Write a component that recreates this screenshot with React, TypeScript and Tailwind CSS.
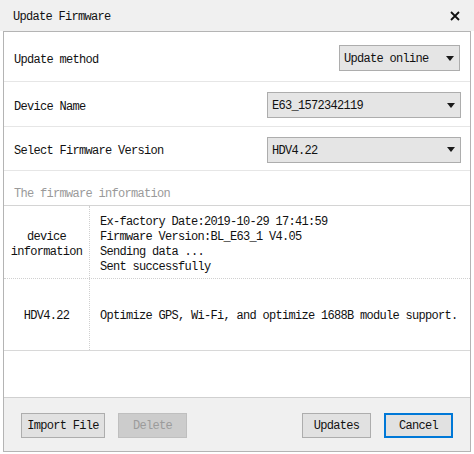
import React from "react";

function Arrow() {
  return (
    <svg width="8" height="5" viewBox="0 0 8 5" className="shrink-0">
      <path d="M0 0 H8 L4 5 Z" fill="#1a1a1a" />
    </svg>
  );
}

function Select({ value, className }: { value: string; className: string }) {
  return (
    <div
      className={`h-[26px] bg-[#e5e5e5] border border-[#adadad] flex items-center justify-between pl-[4px] pr-[5px] ${className}`}
    >
      <span className="pt-[3px]">{value}</span>
      <Arrow />
    </div>
  );
}

function Button({
  label,
  className,
}: {
  label: string;
  className: string;
}) {
  return (
    <div
      className={`h-[25px] flex items-center justify-center border pt-[3px] ${className}`}
    >
      {label}
    </div>
  );
}

export default function App() {
  return (
    <div className="w-[474px] h-[454px] bg-white text-[#111] font-['Liberation_Mono',monospace] text-[12px] tracking-[-0.7px] leading-[15px] flex flex-col">
      <div className="h-[31px] bg-[#f0f0f0] flex items-center justify-between pl-[13px] pr-[14px]">
        <span className="pt-[4px]">Update Firmware</span>
        <svg width="10" height="10" viewBox="0 0 10 10" className="mt-[1px]">
          <path d="M1 1 L9 9 M9 1 L1 9" stroke="#111" strokeWidth="1.8" />
        </svg>
      </div>
      <div className="mx-[3px] w-[468px] h-[421px] border border-[#b4b4b4] flex flex-col bg-white">
        <div className="h-[50px] border-b border-[#e6e6e6] flex items-center justify-between pl-[10px] pr-[10px] pt-[3px]">
          <span className="pt-[4px]">Update method</span>
          <Select value="Update online" className="w-[121px]" />
        </div>
        <div className="h-[45px] border-b border-[#e6e6e6] flex items-center justify-between pl-[10px] pr-[9px] pt-[2px]">
          <span className="pt-[4px]">Device Name</span>
          <Select value="E63_1572342119" className="w-[194px]" />
        </div>
        <div className="h-[44px] border-b border-[#e6e6e6] flex items-center justify-between pl-[10px] pr-[9px] pt-[2px]">
          <span className="pt-[4px]">Select Firmware Version</span>
          <Select value="HDV4.22" className="w-[194px]" />
        </div>
        <div className="h-[35px] border-b border-[#d4d4d4] pl-[10px] pt-[16px] text-[#9a9a9a]">
          The firmware information
        </div>
        <div className="h-[73px] border-b border-dotted border-[#d0d0d0] flex">
          <div className="w-[86px] border-r border-dotted border-[#d0d0d0] flex items-center justify-center text-center pt-[5px]">
            device
            <br />
            information
          </div>
          <div className="flex-1 flex flex-col justify-center pl-[10px] pt-[6px]">
            <div>Ex-factory Date:2019-10-29 17:41:59</div>
            <div>Firmware Version:BL_E63_1 V4.05</div>
            <div>Sending data ...</div>
            <div>Sent successfully</div>
          </div>
        </div>
        <div className="h-[72px] border-b border-[#d8d8d8] flex">
          <div className="w-[86px] border-r border-dotted border-[#d0d0d0] flex items-center justify-center pt-[4px]">
            HDV4.22
          </div>
          <div className="flex-1 flex items-center pl-[10px] pt-[4px]">
            Optimize GPS, Wi-Fi, and optimize 1688B module support.
          </div>
        </div>
        <div className="flex-1" />
        <div className="h-[54px] border-t border-[#d0d0d0] bg-[#f0f0f0] flex items-center justify-between px-[17px] pt-[1px]">
          <div className="flex items-center gap-[13px]">
            <Button
              label="Import File"
              className="w-[84px] bg-[#e1e1e1] border-[#adadad]"
            />
            <Button
              label="Delete"
              className="w-[69px] bg-[#cccccc] border-[#bfbfbf] text-[#9b9b9b]"
            />
          </div>
          <div className="flex items-center gap-[13px]">
            <Button
              label="Updates"
              className="w-[69px] bg-[#e1e1e1] border-[#adadad]"
            />
            <Button
              label="Cancel"
              className="w-[69px] bg-[#e1e1e1] border-[#0078d7] border-2"
            />
          </div>
        </div>
      </div>
    </div>
  );
}
